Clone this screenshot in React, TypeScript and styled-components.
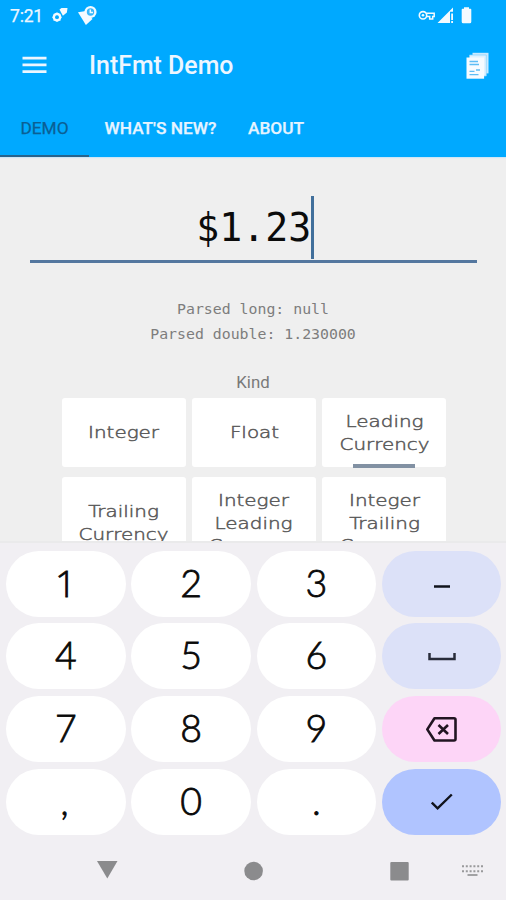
import React from "react";
import styled, { createGlobalStyle } from "styled-components";

const GlobalStyle = createGlobalStyle`
  * { box-sizing: border-box; }
  body { margin: 0; background: #efefef; font-family: Roboto, sans-serif; }
`;

const Screen = styled.div`
  width: 506px;
  height: 900px;
  display: flex;
  flex-direction: column;
  overflow: hidden;
  background: #efefef;
`;

const Header = styled.header`
  height: 157px;
  flex: none;
  background: #00a9ff;
  color: #edf6ff;
  display: flex;
  flex-direction: column;
  box-shadow: 0 1px 1px #cfe6f6;
`;

const StatusBar = styled.div`
  height: 32px;
  display: flex;
  align-items: center;
  padding: 0 32px 0 10px;
`;

const Clock = styled.span`
  font-size: 17.5px;
  line-height: 32px;
  width: 42px;
  letter-spacing: -0.2px;
  -webkit-text-stroke: 0.25px currentColor;
`;

const StatusIcons = styled.svg`
  display: block;
  flex: none;
`;

const Spacer = styled.div`
  flex: 1;
`;

const TitleBar = styled.div`
  height: 67px;
  display: flex;
  align-items: center;
  padding: 0 17px 0 22px;
`;

const Title = styled.h1`
  margin: 1px 0 0 42px;
  font-size: 24.9px;
  line-height: 30px;
  font-weight: 500;
`;

const IconButton = styled.button`
  display: flex;
  padding: 0;
  border: 0;
  background: none;
  color: inherit;
`;

const Tabs = styled.nav`
  height: 58px;
  display: flex;
`;

const Tab = styled.button<{ $width: number; $active?: boolean }>`
  width: ${(p) => p.$width}px;
  padding: 2px 0 0;
  border: 0;
  border-bottom: 2px solid ${(p) => (p.$active ? "#27638c" : "transparent")};
  background: none;
  color: ${(p) => (p.$active ? "#0b5f94" : "#e6f4ff")};
  font: ${(p) => (p.$active ? 400 : 500)} 17.3px Roboto, sans-serif;
  -webkit-text-stroke: 0.25px currentColor;
  white-space: nowrap;
`;

const Content = styled.main`
  height: 384px;
  flex: none;
  overflow: hidden;
  display: flex;
  flex-direction: column;
  align-items: center;
`;

const Field = styled.div`
  width: 447px;
  height: 69px;
  margin-top: 38px;
  border-bottom: 3px solid #54779f;
  display: flex;
  justify-content: center;
  padding-left: 4px;
  position: relative;
  top: 1px;
`;

const FieldText = styled.span`
  font: 38.2px/64px "DejaVu Sans Mono", monospace;
  color: #0b0b0b;
`;

const Caret = styled.span`
  width: 2.5px;
  height: 63px;
  background: #416f9b;
`;

const Parsed = styled.div`
  margin-top: 35px;
  font: 14.85px/24.5px "DejaVu Sans Mono", monospace;
  color: #7d7d7d;
  text-align: center;
`;

const KindLabel = styled.div`
  margin-top: 25px;
  font-size: 16.8px;
  line-height: 22px;
  color: #797979;
`;

const KindGrid = styled.div`
  margin: 5px 0 0 2px;
  flex: none;
  display: grid;
  grid-template-columns: repeat(3, 123.5px);
  grid-template-rows: 69px 93px;
  gap: 9.5px 6.7px;
`;

const KindCard = styled.button`
  padding: 2px 0 0;
  border: 0;
  border-radius: 3px;
  background: #fff;
  color: #505050;
  display: grid;
  place-items: center;
  position: relative;
`;

const KindText = styled.span`
  font: 16.6px/22.8px "DejaVu Sans", sans-serif;
  font-weight: 200;
  -webkit-text-stroke: 0.5px #5c5c5c;
  white-space: pre-line;
  text-align: center;
  transform: scaleX(1.2);
`;

const Marker = styled.span`
  position: absolute;
  left: 31px;
  bottom: -1px;
  width: 62px;
  height: 4px;
  background: #8291a3;
`;

const Keyboard = styled.section`
  height: 359px;
  flex: none;
  background: #f1eff3;
  border-top: 2px solid #eaeaeb;
`;

const Keys = styled.div`
  display: grid;
  grid-template-columns: repeat(4, 119.5px);
  grid-template-rows: repeat(4, 66px);
  gap: 6.7px 5.8px;
  padding: 7.5px 0 0 6px;
`;

const Key = styled.button<{ $bg?: string }>`
  padding: 0;
  border: 0;
  border-radius: 33px;
  background: ${(p) => p.$bg ?? "#fff"};
  display: grid;
  place-items: center;
`;

const KeyText = styled.span<{ $plain?: boolean; $slanted?: boolean }>`
  font-family: ${(p) => (p.$plain ? '"Open Sans"' : "Lato")}, sans-serif;
  font-size: 37.5px;
  font-weight: 300;
  font-style: ${(p) => (p.$slanted ? "italic" : "normal")};
  -webkit-text-stroke: 0.8px #090909;
  line-height: 64px;
  padding-bottom: 2px;
  color: #090909;
`;

const NavBar = styled.div`
  height: 70px;
  padding-left: 96px;
  display: flex;
  align-items: center;
`;

const kinds = [
  "Integer",
  "Float",
  "Leading\nCurrency",
  "Trailing\nCurrency",
  "Integer\nLeading\nCurrency",
  "Integer\nTrailing\nCurrency",
];

const Digit = ({ children }: { children: string }) => (
  <Key>
    <KeyText $plain={children === "1"} $slanted={children === ","}>{children}</KeyText>
  </Key>
);

export default function App() {
  return (
    <Screen>
      <GlobalStyle />
      <Header>
        <StatusBar>
          <Clock>7:21</Clock>
          <StatusIcons width="48" height="24" viewBox="0 0 48 24" fill="#f3faff">
            <circle cx="5" cy="13.2" r="3.2" fill="none" stroke="#f3faff" strokeWidth="2.3" />
            <path d="M5 8.4v9.6M.3 13.2h9.4M1.7 9.8l6.6 6.8M8.3 9.8l-6.600 6.800" stroke="#f3faff" strokeWidth="1.1" />
            <circle cx="5" cy="13.2" r="1.9" fill="#00a9ff" />
            <path d="M7.500 5.500 9.500 4h6l-.6 4.500-4 3.200Z" />
            <path d="M26 8.300 34 7l6.500 8-6.600 6Z" />
            <circle cx="38.500" cy="8" r="6.100" />
            <circle cx="38.500" cy="8" r="3.700" fill="#38b8fc" />
            <path d="M38.300 5.400v3H41" fill="none" stroke="#f3faff" strokeWidth="1.5" />
          </StatusIcons>
          <Spacer />
          <StatusIcons width="56" height="24" viewBox="0 0 56 24" fill="#f3faff">
            <path d="M8.500 9.300h7.700v3.200h-1.500v2.600h-3v-2.600h-3" fill="none" stroke="#f3faff" strokeWidth="1.500" />
            <circle cx="5" cy="11.300" r="3.700" fill="none" stroke="#f3faff" strokeWidth="1.600" />
            <circle cx="5" cy="11.300" r="1.300" />
            <path d="M19.500 19 35 3.600v4.100h-3V19Z" />
            <path d="M33.200 9.500H35V16h-1.800zM33.200 17H35v2h-1.800z" />
            <path d="M46 3.200h5v1.500h1.500q.8 0 .8 1v12q0 1.500-1.500 1.500h-6.600q-1.500 0-1.500-1.500v-12q0-1 .8-1H46Z" />
          </StatusIcons>
        </StatusBar>
        <TitleBar>
          <IconButton aria-label="Menu">
            <svg width="25" height="20" viewBox="0 0 25 20" stroke="currentColor" strokeWidth="2.8">
              <path d="M.5 2.100h24M.5 8.900h24M.5 15.600h24" />
            </svg>
          </IconButton>
          <Title>IntFmt Demo</Title>
          <Spacer />
          <IconButton aria-label="Documents">
            <svg width="23" height="28" viewBox="0 0 23 28">
              <path d="M6.500.8h16v20.600h-16z" fill="#c9eaff" />
              <path d="M3.500 3h16.800v21H3.500z" fill="#dff2ff" stroke="#84d2ff" strokeWidth=".7" />
              <path d="M.5 5.500h17.600v21.200H.5z" fill="#f6fbff" />
              <path d="M3.500 9.500h8.500M3.500 12.500h9.500M10 18h4M3.500 19.400h5M3.500 22.600h9" stroke="#5dbdf5" strokeWidth="1.4" />
            </svg>
          </IconButton>
        </TitleBar>
        <Tabs>
          <Tab $width={89} $active>DEMO</Tab>
          <Tab $width={143}>WHAT'S NEW?</Tab>
          <Tab $width={88}>ABOUT</Tab>
        </Tabs>
      </Header>
      <Content>
        <Field>
          <FieldText>$1.23</FieldText>
          <Caret />
        </Field>
        <Parsed>
          <div>Parsed long: null</div>
          <div>Parsed double: 1.230000</div>
        </Parsed>
        <KindLabel>Kind</KindLabel>
        <KindGrid>
          {kinds.map((kind) => (
            <KindCard key={kind}>
              <KindText>{kind}</KindText>
              {kind === "Leading\nCurrency" && <Marker />}
            </KindCard>
          ))}
        </KindGrid>
      </Content>
      <Keyboard>
        <Keys>
          <Digit>1</Digit>
          <Digit>2</Digit>
          <Digit>3</Digit>
          <Key $bg="#dce1f8" aria-label="Minus">
            <svg width="18" height="12" viewBox="0 0 18 12"><path d="M1 8.500h16" stroke="#11131c" strokeWidth="2.500" /></svg>
          </Key>
          <Digit>4</Digit>
          <Digit>5</Digit>
          <Digit>6</Digit>
          <Key $bg="#dce1f8" aria-label="Space">
            <svg width="28" height="10" viewBox="0 0 28 10"><path d="M1.500 2v6h25V2" fill="none" stroke="#292c3a" strokeWidth="2.500" /></svg>
          </Key>
          <Digit>7</Digit>
          <Digit>8</Digit>
          <Digit>9</Digit>
          <Key $bg="#fdd5f7" aria-label="Backspace">
            <svg width="32" height="28" viewBox="0 0 32 28" fill="none" stroke="#211522" strokeWidth="2.600">
              <path d="M8.500 3.300h19.500q1.500 0 1.500 1.500V24q0 1.500-1.500 1.500H8.500L1.300 14.400Z" strokeLinejoin="round" />
              <path d="m12.500 10 9.500 9M22 10l-9.500 9" />
            </svg>
          </Key>
          <Digit>,</Digit>
          <Digit>0</Digit>
          <Digit>.</Digit>
          <Key $bg="#b0c4ff" aria-label="Done">
            <svg width="22" height="18" viewBox="0 0 22 18"><path d="m.800 9.500 5.800 5.800L20.800 1.500" fill="none" stroke="#10131d" strokeWidth="2.400" /></svg>
          </Key>
        </Keys>
        <NavBar>
          <svg width="400" height="24" viewBox="0 0 400 24" fill="#8b8b8d">
            <path d="M1 3h20.500L11.300 20.500Z" />
            <circle cx="157.600" cy="13" r="9.300" />
            <rect x="294.300" y="4" width="18.400" height="18.400" rx="1" />
            <path d="M366 8.300h21M366 13.200h21" stroke="#99999b" strokeWidth="2" strokeDasharray="2 1.800" />
            <path d="M371.500 17h10" stroke="#99999b" strokeWidth="1.800" />
          </svg>
        </NavBar>
      </Keyboard>
    </Screen>
  );
}
